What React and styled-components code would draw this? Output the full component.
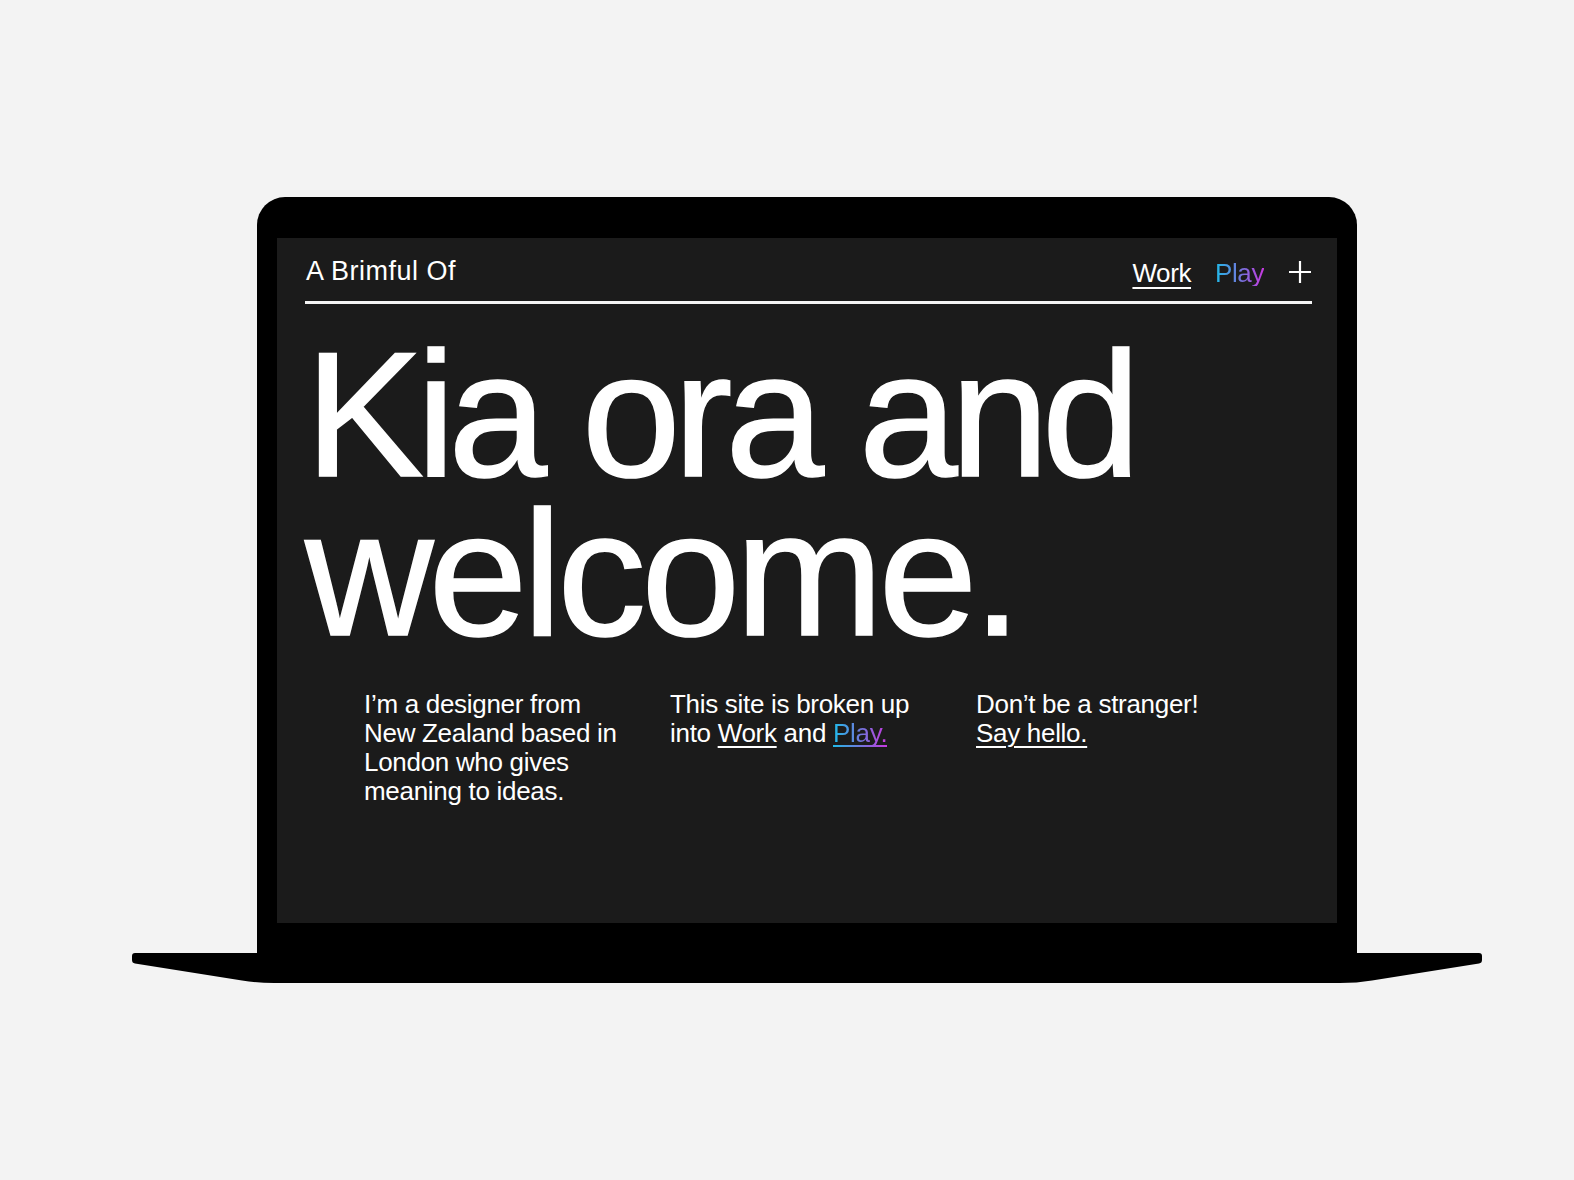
import React from "react";
import styled, { createGlobalStyle } from "styled-components";

const GlobalStyle = createGlobalStyle`
  html, body {
    margin: 0;
    padding: 0;
    background: #f3f3f3;
  }
  * { box-sizing: border-box; }
`;

const Page = styled.div`
  width: 1574px;
  height: 1180px;
  padding: 197px 0 0 132px;
  background: #f3f3f3;
  font-family: "Liberation Sans", Arial, sans-serif;
`;

const Laptop = styled.div`
  width: 1350px;
  display: flex;
  flex-direction: column;
  align-items: center;
`;

const Lid = styled.div`
  width: 1100px;
  height: 756px;
  background: #000;
  border-radius: 28px 28px 0 0;
  padding: 41px 20px 30px;
  display: flex;
`;

const Screen = styled.div`
  flex: 1;
  background: #1b1b1b;
  color: #fff;
  padding: 0 25px 0 28px;
  display: flex;
  flex-direction: column;
`;

const Header = styled.header`
  display: flex;
  align-items: flex-end;
  justify-content: space-between;
  height: 66px;
  padding-bottom: 14px;
  border-bottom: 3px solid #f4f4f4;
`;

const Logo = styled.div`
  font-size: 27px;
  line-height: 27px;
  letter-spacing: 0.5px;
  margin: 0 0 2px 1px;
`;

const Nav = styled.nav`
  display: flex;
  align-items: baseline;
  gap: 24px;
  font-size: 26px;
  line-height: 26px;
  letter-spacing: -0.4px;
`;

const Link = styled.a`
  color: #fff;
  text-decoration: underline;
  text-decoration-thickness: 2px;
  text-underline-offset: ${(p) => (p.$offset ? p.$offset : 4)}px;
  cursor: pointer;
`;

const GradientText = styled.span`
  background-image: linear-gradient(90deg, #1fbbe9 0%, #6f78dc 50%, #c838e0 100%),
    linear-gradient(90deg, #1fbbe9 0%, #6f78dc 50%, #c838e0 100%);
  background-repeat: no-repeat;
  background-size: 100% 100%, 100% ${(p) => (p.$underline ? "2px" : "0px")};
  background-position: 0 0, 0 calc(100% - 1px);
  -webkit-background-clip: text, border-box;
  background-clip: text, border-box;
  color: transparent;
  cursor: pointer;
`;

const PlusIcon = styled.svg`
  width: 24px;
  height: 24px;
  align-self: center;
  margin-bottom: 3px;
`;

const Hero = styled.h1`
  margin: 31px 0 0;
  font-weight: 400;
  font-size: 178px;
  line-height: 159px;
  -webkit-text-stroke: 1.5px #fff;
  color: #fff;
`;

const HeroLine = styled.span`
  display: block;
  letter-spacing: ${(p) => p.$tracking};
`;

const Intro = styled.div`
  display: grid;
  grid-template-columns: repeat(3, 306px);
  margin: 37px 0 0 59px;
`;

const Para = styled.p`
  margin: 0;
  font-size: 26px;
  line-height: 29px;
  letter-spacing: -0.3px;
`;

const Base = styled.svg`
  display: block;
  width: 1350px;
  height: 30px;
`;

export default function App() {
  return (
    <Page>
      <GlobalStyle />
      <Laptop>
        <Lid>
          <Screen>
            <Header>
              <Logo>A Brimful Of</Logo>
              <Nav>
                <Link $offset={5}>Work</Link>
                <GradientText>Play</GradientText>
                <PlusIcon viewBox="0 0 24 24" fill="none" stroke="#fff" strokeWidth="2.2">
                  <path d="M12 1v22M1 12h22" />
                </PlusIcon>
              </Nav>
            </Header>
            <Hero>
              <HeroLine $tracking="-0.042em">Kia ora and</HeroLine>
              <HeroLine $tracking="-0.028em">welcome.</HeroLine>
            </Hero>
            <Intro>
              <Para>
                I’m a designer from
                <br />
                New Zealand based in
                <br />
                London who gives
                <br />
                meaning to ideas.
              </Para>
              <Para>
                This site is broken up
                <br />
                into <Link>Work</Link> and <GradientText $underline>Play.</GradientText>
              </Para>
              <Para>
                Don’t be a stranger!
                <br />
                <Link>Say hello.</Link>
              </Para>
            </Intro>
          </Screen>
        </Lid>
        <Base viewBox="0 0 1350 30">
          <path
            d="M3 0 H1347 Q1350 0 1350 3 V7 Q1350 10 1347 10.5 L1240 27.5 Q1225 30 1208 30 H142 Q125 30 110 27.5 L3 10.5 Q0 10 0 7 V3 Q0 0 3 0 Z"
            fill="#000"
          />
        </Base>
      </Laptop>
    </Page>
  );
}
